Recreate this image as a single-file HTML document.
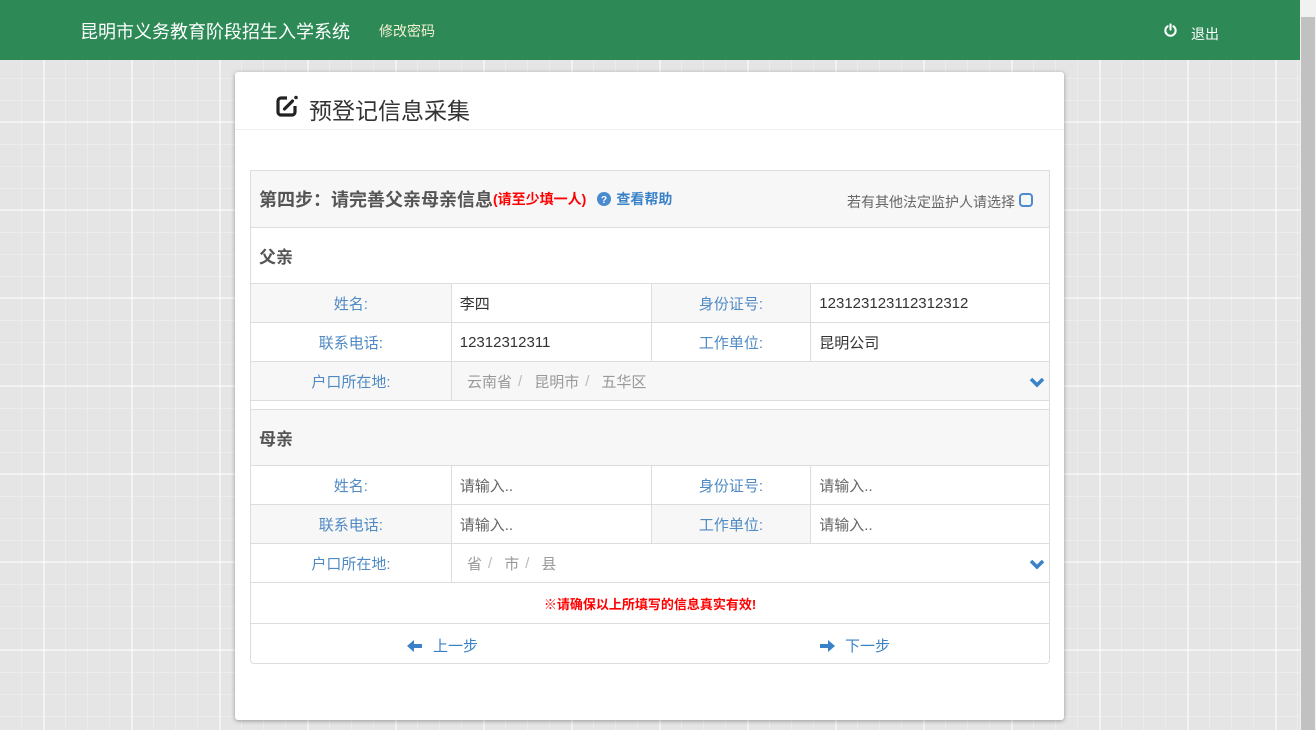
<!DOCTYPE html>
<html><head><meta charset="utf-8"><style>
*{margin:0;padding:0;box-sizing:border-box}
body{width:1316px;height:730px;overflow:hidden;position:relative;font-family:"Liberation Sans","Noto Sans CJK SC",sans-serif;
background-color:#e5e5e5;
background-image:
linear-gradient(90deg,rgba(255,255,255,.45) 2px,transparent 2px),
linear-gradient(0deg,rgba(255,255,255,.45) 2px,transparent 2px),
linear-gradient(90deg,rgba(255,255,255,.25) 1px,transparent 1px),
linear-gradient(0deg,rgba(255,255,255,.25) 1px,transparent 1px);
background-size:88px 88px,88px 88px,22px 22px,22px 22px;
background-position:43px 35px,43px 35px,21px 13px,21px 13px;}
.top{position:absolute;left:0;top:0;width:1300px;height:60px;background:#2d8a57;color:#fff}
.top .t{position:absolute;left:80px;top:18px;font-size:18px}
.top .m{position:absolute;left:379px;top:21px;font-size:14px;color:#f3f0d0}
.top .q{position:absolute;left:1191px;top:24px;font-size:14px}
.sb{position:absolute;left:1300px;top:0;width:16px;height:730px;background:#f1f1f1}
.sb div{position:absolute;left:1px;top:17px;width:14px;height:713px;background:#c1c1c1}
.card{position:absolute;left:235px;top:72px;width:829px;height:648px;background:#fff;border-radius:3px;box-shadow:0 1px 4px rgba(0,0,0,.35)}
.ch{height:58px;border-bottom:1px solid #eee;position:relative}
.ch span{position:absolute;left:74px;top:20px;font-size:23px;color:#333}
.panel{position:absolute;left:15px;top:98px;width:800px;border:1px solid #ddd;border-radius:0 0 4px 4px}
.row{display:flex;border-top:1px solid #ddd;height:39px;align-items:center;font-size:15px}
.row>div{height:100%;display:flex;align-items:center;border-left:1px solid #ddd}
.row>div:first-child{border-left:0}
.l{color:#4f8ac4;justify-content:center}
.c1{width:200px}.c2{width:200px;padding-left:8px;color:#333}.c3{width:160px}.c4{width:239px;padding-left:8px;color:#333}
.ph{color:#666}
.g{background:#f7f7f7}
.sec{height:56px;font-size:17px;font-weight:bold;color:#555;padding-left:8px;display:flex;align-items:center}
.addr{flex:1;padding-left:15px;color:#999;position:relative}
.addr .s{color:#bbb;margin:0 12px 0 6px}
.chev{position:absolute;right:4px;top:14px}
</style></head><body>
<div class="top"><span class="t">昆明市义务教育阶段招生入学系统</span><span class="m">修改密码</span>
<svg style="position:absolute;left:1163px;top:23px" width="15" height="15" viewBox="0 0 16 16"><path d="M5 3.5A5.5 5.5 0 1 0 11 3.5" fill="none" stroke="#fff" stroke-width="2.2" stroke-linecap="round"/><path d="M8 1.5V7" stroke="#fff" stroke-width="2.2" stroke-linecap="round"/></svg>
<span class="q">退出</span></div>
<div class="sb"><div></div></div>
<div class="card">
<div class="ch"><svg style="position:absolute;left:40px;top:22px" width="24" height="24" viewBox="0 0 24 24"><path d="M12 4H6a3 3 0 0 0-3 3v11a3 3 0 0 0 3 3h11a3 3 0 0 0 3-3v-6" fill="none" stroke="#222" stroke-width="3.2"/><path d="M9.5 15l8-8" stroke="#222" stroke-width="3.2" stroke-linecap="round"/><circle cx="21" cy="3.5" r="1.8" fill="#222"/></svg><span>预登记信息采集</span></div>
<div class="panel">
<div class="g" style="height:56px;display:flex;align-items:center;padding-left:8px;position:relative">
<b style="font-size:18px;color:#555">第四步：请完善父亲母亲信息</b><span style="color:#f00;font-size:14px;font-weight:bold">(请至少填一人)</span>
<svg style="margin-left:11px" width="14" height="14" viewBox="0 0 14 14"><circle cx="7" cy="7" r="7" fill="#4a8bd0"/><text x="7" y="11" font-size="10" font-weight="bold" fill="#fff" text-anchor="middle" font-family="Liberation Sans">?</text></svg>
<span style="color:#3a82c8;font-size:14px;font-weight:bold;margin-left:5px">查看帮助</span>
<span style="position:absolute;right:34px;top:21px;font-size:14px;color:#666">若有其他法定监护人请选择</span>
<span style="position:absolute;right:16px;top:22px;width:14px;height:14px;border:2.5px solid #4a8bd0;border-radius:4px"></span>
</div>
<div class="row sec" style="height:56px">父亲</div>
<div class="row"><div class="l c1 g">姓名:</div><div class="c2">李四</div><div class="l c3 g">身份证号:</div><div class="c4">123123123112312312</div></div>
<div class="row"><div class="l c1">联系电话:</div><div class="c2">12312312311</div><div class="l c3">工作单位:</div><div class="c4">昆明公司</div></div>
<div class="row g"><div class="l c1">户口所在地:</div><div class="addr">云南省<span class="s">/</span>昆明市<span class="s">/</span>五华区<svg class="chev" width="16" height="12" viewBox="0 0 16 12"><path d="M2 3l6 6 6-6" fill="none" stroke="#3a82c8" stroke-width="3.5"/></svg></div></div>
<div style="height:9px;border-top:1px solid #ddd;background:#fff"></div>
<div class="row sec g" style="height:56px">母亲</div>
<div class="row"><div class="l c1">姓名:</div><div class="c2 ph">请输入..</div><div class="l c3">身份证号:</div><div class="c4 ph">请输入..</div></div>
<div class="row"><div class="l c1 g">联系电话:</div><div class="c2 ph">请输入..</div><div class="l c3 g">工作单位:</div><div class="c4 ph">请输入..</div></div>
<div class="row"><div class="l c1">户口所在地:</div><div class="addr">省<span class="s">/</span>市<span class="s">/</span>县<svg class="chev" width="16" height="12" viewBox="0 0 16 12"><path d="M2 3l6 6 6-6" fill="none" stroke="#3a82c8" stroke-width="3.5"/></svg></div></div>
<div class="row" style="height:41px;justify-content:center;color:#f00;font-size:13px;font-weight:bold">※请确保以上所填写的信息真实有效!</div>
<div class="row" style="height:40px;color:#3a82c8;font-size:15px;position:relative">
<span style="position:absolute;left:156px;top:11px;display:flex;align-items:center"><svg width="16" height="14" viewBox="0 0 16 14"><path d="M0 7l7-6v4h8v4H7v4z" fill="#3a82c8"/></svg><span style="margin-left:10px">上一步</span></span>
<span style="position:absolute;left:568px;top:11px;display:flex;align-items:center"><svg width="16" height="14" viewBox="0 0 16 14"><path d="M16 7L9 1v4H1v4h8v4z" fill="#3a82c8"/></svg><span style="margin-left:10px">下一步</span></span>
</div>
</div>
</div>
</body></html>
